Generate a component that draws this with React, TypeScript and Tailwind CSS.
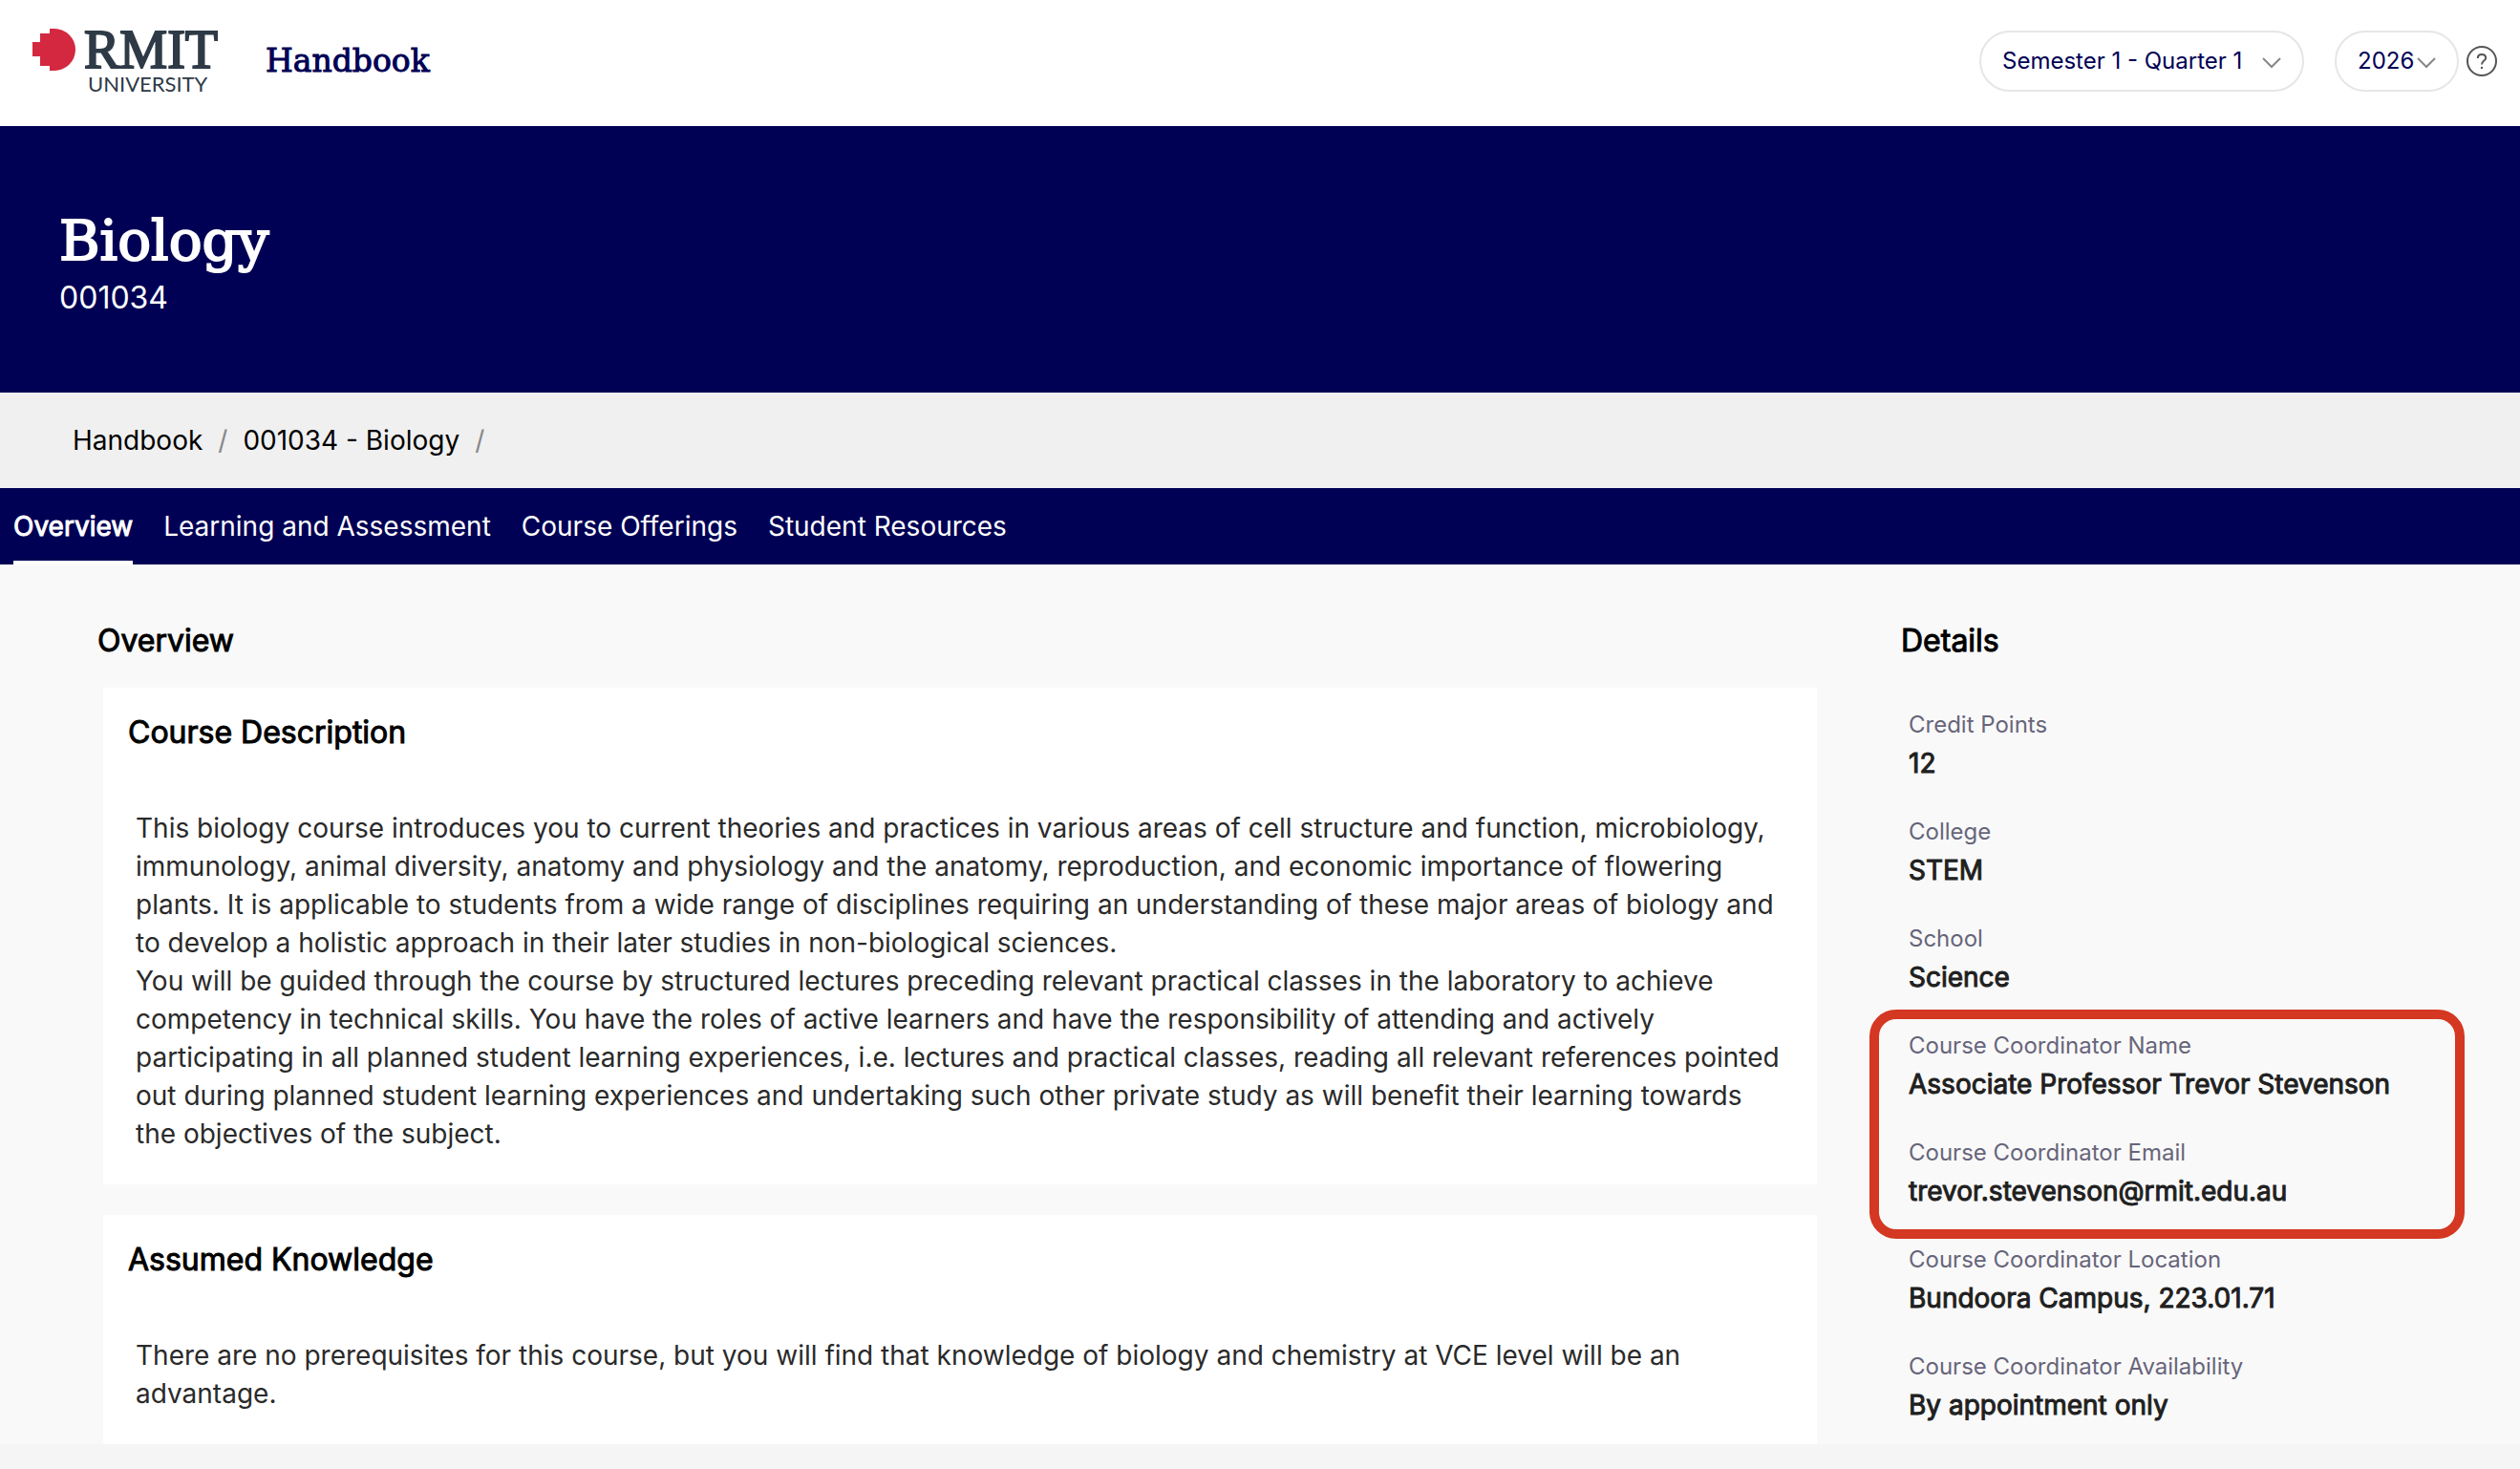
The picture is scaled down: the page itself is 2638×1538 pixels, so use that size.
import React from "react";

const details = [
  { label: "Credit Points", value: "12" },
  { label: "College", value: "STEM" },
  { label: "School", value: "Science" },
];

const coordinator = [
  { label: "Course Coordinator Name", value: "Associate Professor Trevor Stevenson" },
  { label: "Course Coordinator Email", value: "trevor.stevenson@rmit.edu.au" },
];

const coordinatorExtra = [
  { label: "Course Coordinator Location", value: "Bundoora Campus, 223.01.71" },
  { label: "Course Coordinator Availability", value: "By appointment only" },
];

const tabs = ["Learning and Assessment", "Course Offerings", "Student Resources"];

function Logo() {
  return (
    <a href="#" aria-label="RMIT University" className="flex items-start gap-2 text-[#2f3a47]">
      <svg width="46" height="44" viewBox="0 0 46 44" className="mt-[30px]" aria-hidden="true">
        <path
          d="M18 0H23A22 22 0 0 1 23 44H18V39H8V29H0V14H8V5H18Z"
          fill="#d3283f"
        />
      </svg>
      <span className="flex flex-col pt-5">
        <span className="font-['Liberation_Serif',serif] text-[56px] leading-[64px] [-webkit-text-stroke:2px_#2f3a47]">
          RMIT
        </span>
        <span className="-mt-2 pl-1 font-[Lato,sans-serif] text-[22px] leading-6">UNIVERSITY</span>
      </span>
    </a>
  );
}

function Chevron({ className }: { className: string }) {
  return (
    <svg
      width="20"
      height="12"
      viewBox="0 0 20 12"
      fill="none"
      stroke="#888"
      strokeWidth="2"
      aria-hidden="true"
      className={className}
    >
      <path d="M1 1L10 10L19 1" />
    </svg>
  );
}

function Field({ label, value }: { label: string; value: string }) {
  return (
    <div>
      <dt className="text-2xl leading-8 text-[#67657b]">{label}</dt>
      <dd className="pt-1 text-[28px] leading-10 text-[#1f1f1f] [-webkit-text-stroke:1px_#1f1f1f]">{value}</dd>
    </div>
  );
}

function Card({ title, children }: { title: string; children: React.ReactNode }) {
  return (
    <section className="bg-white px-[26px] pt-[25px] pb-[33px]">
      <h3 className="text-[32px] leading-11 text-black [-webkit-text-stroke:1px_#000]">{title}</h3>
      <div className="px-2 pt-[58px] text-[28px] leading-10 text-[#2a2a2a]">{children}</div>
    </section>
  );
}

export default function App() {
  return (
    <div className="min-h-screen bg-[#f5f5f5] font-[Inter,sans-serif] text-black">
      <header className="flex h-[132px] items-center justify-between bg-white pr-6 pl-[34px]">
        <div className="flex h-full items-center gap-[50px]">
          <div className="h-full">
            <Logo />
          </div>
          <a
            href="#"
            className="pb-1 font-['DejaVu_Serif',serif] text-[33px] leading-10 text-[#000054] [-webkit-text-stroke:1px_#000054]"
          >
            Handbook
          </a>
        </div>
        <div className="flex items-center pb-1">
          <div className="relative mr-8">
            <select
              aria-label="Teaching period"
              className="h-16 w-[340px] appearance-none rounded-full border-2 border-[#e6e6e6] bg-white pl-[22px] text-2xl text-[#000054]"
            >
              <option>Semester 1 - Quarter 1</option>
            </select>
            <Chevron className="pointer-events-none absolute top-7 right-6" />
          </div>
          <div className="relative mr-2">
            <select
              aria-label="Year"
              className="h-16 w-[130px] appearance-none rounded-full border-2 border-[#e6e6e6] bg-white pl-[22px] text-2xl text-[#000054]"
            >
              <option>2026</option>
            </select>
            <Chevron className="pointer-events-none absolute top-7 right-6" />
          </div>
          <button aria-label="Help">
            <svg width="32" height="32" viewBox="0 0 32 32" fill="none" stroke="#555" strokeWidth="2">
              <circle cx="16" cy="16" r="15" />
              <path d="M11.800 13C11.800 10.500 13.600 9 16 9S20.200 10.500 20.200 12.700C20.200 15.500 16 15.800 16 19.500" />
              <circle cx="16" cy="23" r="1.200" fill="#555" stroke="none" />
            </svg>
          </button>
        </div>
      </header>

      <div className="h-[279px] bg-[#000054] px-[62px] pt-[84px] text-white">
        <h1 className="font-['DejaVu_Serif',serif] text-[58px] leading-[72px] [-webkit-text-stroke:2px_#fff]">
          Biology
        </h1>
        <p className="pt-1 text-[32px] leading-10">001034</p>
      </div>

      <nav aria-label="Breadcrumb" className="flex h-[100px] items-center gap-4 bg-[#f0f0f0] px-[76px] text-[28px]">
        <a href="#">Handbook</a>
        <span className="text-[#888]">/</span>
        <a href="#">001034 - Biology</a>
        <span className="text-[#888]">/</span>
      </nav>

      <nav aria-label="Sections" className="flex h-20 gap-8 bg-[#000054] px-[14px] text-[28px] leading-[80px] text-white">
        <a href="#" aria-current="page" className="border-b-4 border-white [-webkit-text-stroke:1px_#fff]">
          Overview
        </a>
        {tabs.map((tab) => (
          <a key={tab} href="#">
            {tab}
          </a>
        ))}
      </nav>

      <div className="flex bg-[#f9f9f9]">
        <main className="min-w-0 flex-1 pl-[108px]">
          <h2 className="-ml-1.5 pt-14 pb-[25px] text-[32px] leading-[48px] [-webkit-text-stroke:1px_#000]">
            Overview
          </h2>
          <div className="flex flex-col gap-8">
            <Card title="Course Description">
              <p>
                This biology course introduces you to current theories and practices in various areas of cell
                structure and function, microbiology, immunology, animal diversity, anatomy and physiology and
                the anatomy, reproduction, and economic importance of flowering plants. It is applicable to
                students from a wide range of disciplines requiring an understanding of these major areas of
                biology and to develop a holistic approach in their later studies in non-biological sciences.
              </p>
              <p>
                You will be guided through the course by structured lectures preceding relevant practical
                classes in the laboratory to achieve competency in technical skills. You have the roles of
                active learners and have the responsibility of attending and actively participating in all
                planned student learning experiences, i.e. lectures and practical classes, reading all relevant
                references pointed out during planned student learning experiences and undertaking such other
                private study as will benefit their learning towards the objectives of the subject.
              </p>
            </Card>
            <Card title="Assumed Knowledge">
              <p>
                There are no prerequisites for this course, but you will find that knowledge of biology and
                chemistry at VCE level will be an advantage.
              </p>
            </Card>
          </div>
        </main>

        <aside className="ml-[55px] w-[681px] shrink-0 pr-[58px]">
          <h2 className="pt-14 pl-[33px] text-[32px] leading-[48px] [-webkit-text-stroke:1px_#000]">Details</h2>
          <dl className="flex flex-col gap-9 pt-12 pl-[41px]">
            {details.map((item) => (
              <Field key={item.label} {...item} />
            ))}
          </dl>
          <dl className="mt-3.5 flex flex-col gap-9 rounded-[28px] border-10 border-[#d43722] px-[31px] pt-3 pb-5">
            {coordinator.map((item) => (
              <Field key={item.label} {...item} />
            ))}
          </dl>
          <dl className="flex flex-col gap-9 pt-1.5 pl-[41px]">
            {coordinatorExtra.map((item) => (
              <Field key={item.label} {...item} />
            ))}
          </dl>
        </aside>
      </div>
    </div>
  );
}
